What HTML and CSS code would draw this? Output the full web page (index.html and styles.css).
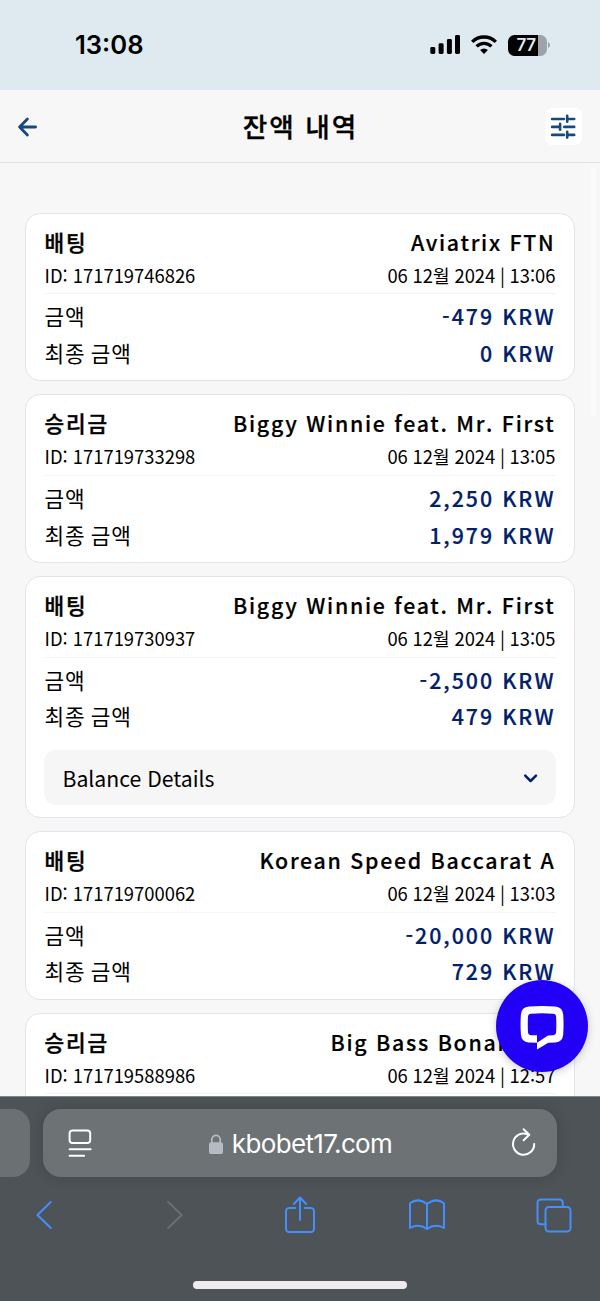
FILE: index.html
```html
<!DOCTYPE html>
<html lang="ko">
<head>
<meta charset="utf-8">
<title>잔액 내역</title>
<link rel="stylesheet" href="styles.css">
</head>
<body>
<div class="phone">
  <div class="status">
    <span class="clock">13:08</span>
    <div class="indicators">
      <svg class="signal" width="31" height="20" viewBox="0 0 31 20"><rect x="0.3" y="12" width="5" height="7" rx="1.4"/><rect x="8.6" y="8.3" width="5" height="10.7" rx="1.4"/><rect x="16.9" y="4" width="5" height="15" rx="1.4"/><rect x="25" y="0" width="5" height="19" rx="1.4"/></svg>
      <svg class="wifi" width="26" height="20" viewBox="0 0 26 20" fill="none" stroke="#000" stroke-width="3.3"><path d="M1.2 6.9a16.6 16.6 0 0 1 23.6 0"/><path d="M5.6 11.4a10.4 10.4 0 0 1 14.8 0"/><path d="M13 18.9l-3.9-3.8a5.5 5.5 0 0 1 7.8 0z" fill="#000" stroke="none"/></svg>
      <div class="battery"><span class="battery-level">77</span></div>
      <svg class="battery-tip" width="2" height="6" viewBox="0 0 2 6"><path d="M0 0a3.2 3.2 0 0 1 0 6z" fill="#9da4a9"/></svg>
    </div>
  </div>
  <header class="topbar">
    <svg class="back" width="20" height="20" viewBox="0 0 20 20" fill="none" stroke="#174a7c" stroke-width="2.8" stroke-linecap="round" stroke-linejoin="round"><path d="M17.6 10H1.6M9.4 2L1.6 10l7.8 8"/></svg>
    <h1 class="heading">잔액 내역</h1>
    <button class="filter" aria-label="필터"><svg width="26" height="26" viewBox="0 0 26 26" fill="none" stroke="#174a7c" stroke-width="2.6" stroke-linecap="round"><path d="M2.1 5h11.8M17.6 5h6.6M17.2 1.9v5.8M2.1 12.9h7.7M10.1 9.9v5.8M14.3 12.9h9.9M2.1 20.9h11.8M17.6 20.9h6.6M17.2 17.8v5.8"/></svg></button>
  </header>
  <main class="feed">
    <div class="thumb"></div>
    <article class="card">
      <div class="row title"><b>배팅</b><b>Aviatrix FTN</b></div>
      <div class="row meta"><span>ID: 171719746826</span><span>06 12월 2024 | 13:06</span></div>
      <div class="row sum"><span>금액</span><b>-479 KRW</b></div>
      <div class="row sum"><span>최종 금액</span><b>0 KRW</b></div>
    </article>
    <article class="card">
      <div class="row title"><b>승리금</b><b>Biggy Winnie feat. Mr. First</b></div>
      <div class="row meta"><span>ID: 171719733298</span><span>06 12월 2024 | 13:05</span></div>
      <div class="row sum"><span>금액</span><b>2,250 KRW</b></div>
      <div class="row sum"><span>최종 금액</span><b>1,979 KRW</b></div>
    </article>
    <article class="card">
      <div class="row title"><b>배팅</b><b>Biggy Winnie feat. Mr. First</b></div>
      <div class="row meta"><span>ID: 171719730937</span><span>06 12월 2024 | 13:05</span></div>
      <div class="row sum"><span>금액</span><b>-2,500 KRW</b></div>
      <div class="row sum"><span>최종 금액</span><b>479 KRW</b></div>
      <div class="details"><span>Balance Details</span><svg width="14" height="9" viewBox="0 0 14 9" fill="none" stroke="#03206a" stroke-width="2.5" stroke-linecap="round" stroke-linejoin="round"><path d="M1.2 2.7L6.6 8 12 2.7"/></svg></div>
    </article>
    <article class="card">
      <div class="row title"><b>배팅</b><b>Korean Speed Baccarat A</b></div>
      <div class="row meta"><span>ID: 171719700062</span><span>06 12월 2024 | 13:03</span></div>
      <div class="row sum"><span>금액</span><b>-20,000 KRW</b></div>
      <div class="row sum"><span>최종 금액</span><b>729 KRW</b></div>
    </article>
    <article class="card">
      <div class="row title"><b>승리금</b><b>Big Bass Bonanza™</b></div>
      <div class="row meta"><span>ID: 171719588986</span><span>06 12월 2024 | 12:57</span></div>
      <div class="row sum"></div>
    </article>
    <button class="chat" aria-label="Chat"><svg width="44" height="46" viewBox="0 0 44 46"><path fill="#fff" fill-rule="evenodd" d="M9 2.5Q22 1.5 35 2.5Q42.600 3 43.200 10.500Q43.900 20 43.200 30.500Q42.600 38 35.500 38.500L28.300 38.800 17 45.500V38.700L8.500 38.500Q1.500 38 .9 30.500Q.2 20 .9 10.500Q1.500 3 9 2.500ZM11 9.700Q8.200 9.900 8 12.500Q7.500 20 8 28.300Q8.200 31 11 31.200H17V38.800L28 31.500 33 31.200Q35.900 31 36.100 28.300Q36.600 20 36.100 12.500Q35.900 9.900 33 9.700Q22 8.900 11 9.700Z"/></svg></button>
  </main>
  <footer class="browser">
    <div class="tabs">
      <div class="tab-prev"></div>
      <div class="address">
        <svg class="reader" width="24" height="28" viewBox="0 0 24 28" fill="none" stroke="#fff" stroke-width="2" stroke-linecap="round"><rect x="1.600" y="1.500" width="20.600" height="12.500" rx="3"/><path d="M1.600 20.300h21M1.600 26.700h14.500"/></svg>
        <div class="site"><svg width="14" height="20" viewBox="0 0 14 20"><rect y="8.300" width="14" height="11.700" rx="2" fill="#b8bac1"/><path d="M2.800 9V5.500a4.200 4.200 0 0 1 8.400 0V9" fill="none" stroke="#b8bac1" stroke-width="1.700"/></svg><span>kbobet17.com</span></div>
        <svg class="reload" width="24" height="28" viewBox="0 0 24 28" fill="none" stroke="#fff" stroke-width="2" stroke-linecap="round" stroke-linejoin="round"><path d="M16.500 5.300A10.600 10.600 0 1 0 23.200 15M12.600.2l5.700 5.500-5.700 5.500"/></svg>
      </div>
    </div>
    <nav class="tools">
      <svg width="16" height="28" viewBox="0 0 16 28" class="nav-back"><path d="M14.800 1L1.400 14l13.400 13"/></svg>
      <svg width="16" height="28" viewBox="0 0 16 28" class="nav-forward"><path d="M1.200 1l13.400 13L1.200 27"/></svg>
      <svg width="30" height="38" viewBox="0 0 30 38" class="share"><path d="M10.300 12H4.500Q1 12 1 15.500v17Q1 36 4.500 36h21q3.500 0 3.500-3.500v-17Q29 12 25.500 12h-5.800M15 24V2M8.800 8L15 1.500 21.200 8"/></svg>
      <svg width="38" height="32" viewBox="0 0 38 32" class="book"><path d="M19 5Q10-1.800 2 4.200V29q9-5 17 1 8-6 17-1V4.200Q28-1.800 19 5zV30"/></svg>
      <svg width="36" height="35" viewBox="0 0 36 35" class="pages"><rect x="9.500" y="9" width="25" height="24.500" rx="3.500"/><path d="M9.500 26.300H5q-3.500 0-3.500-3.500V5Q1.500 1.500 5 1.500h18.300q3.500 0 3.500 3.500v4"/></svg>
    </nav>
    <div class="home"></div>
  </footer>
</div>
</body>
</html>
```
FILE: styles.css
```css
* { box-sizing: border-box; }
body { margin: 0; background: #f7f7f7; color: #000; font-family: "Noto Sans CJK KR", "Noto Sans", sans-serif; }
svg { display: block; flex: none; overflow: visible; }
button { border: 0; padding: 0; }
.phone { width: 600px; height: 1301px; display: flex; flex-direction: column; overflow: hidden; }

.status { flex: none; height: 90px; background: #dfe9f0; display: flex; justify-content: space-between; align-items: center; padding: 0 50px 0 75px; font-family: Inter, sans-serif; }
.clock { font-size: 25.6px; font-weight: 600; letter-spacing: 0; line-height: 30px; }
.indicators { display: flex; align-items: center; }
.wifi { margin: 0 11px 0 10px; }
.battery { width: 39px; height: 21px; border-radius: 6.5px; overflow: hidden; background: linear-gradient(90deg, #000 30px, #9da4a9 30px); color: #dfe9f0; font-size: 17px; font-weight: 600; line-height: 21px; padding-left: 8.5px; }
.battery-level { letter-spacing: -0.3px; }
.battery-tip { margin-left: 1px; }

.topbar { flex: none; height: 73px; border-bottom: 1px solid #dbe2e9; display: flex; justify-content: space-between; align-items: center; padding: 1px 18px 0; }
.back { margin-right: 17px; }
.heading { margin: -2px 0 0 1px; font-size: 26.67px; font-weight: 500; letter-spacing: 2px; line-height: 40px; -webkit-text-stroke: 0.3px; }
.filter { width: 37px; height: 37px; border-radius: 7px; background: #fff; display: grid; place-items: center; padding-right: 1px; }

.feed { flex: none; height: 933px; position: relative; overflow: hidden; padding: 49.7px 25px 0; display: flex; flex-direction: column; gap: 13.3px; }
.thumb { position: absolute; left: 591px; top: 4px; width: 5px; height: 250px; border-radius: 3px; background: #fbfbfb; }
.card { flex: none; border: 1px solid #e1e4ea; border-radius: 15px; background: #fff; padding: 12px 18.5px 9px; }
.row { display: flex; justify-content: space-between; white-space: nowrap; }
.title { height: 32px; line-height: 32px; font-size: 21.33px; letter-spacing: 1.72px; }
.title b, .sum b { font-weight: 500; -webkit-text-stroke: 0.2px; }
.title b:first-child { letter-spacing: 1.9px; -webkit-text-stroke: 0.4px; }
.meta { height: 36.5px; line-height: 34.8px; font-size: 18.4px; border-bottom: 1px solid #f4f4f5; margin-bottom: 4.2px; }
.meta span:last-child { word-spacing: -0.5px; }
.sum { height: 36.4px; line-height: 36.4px; font-size: 21.33px; letter-spacing: 1px; }
.sum span { word-spacing: -2px; }
.sum b { color: #03206a; letter-spacing: 2px; }
.details { height: 54.7px; margin: 15.5px 0 3px -1px; border-radius: 12px; background: #f6f6f6; display: flex; align-items: center; justify-content: space-between; padding: 0 18px 0 19px; font-size: 21.2px; }
.chat { position: absolute; left: 496px; top: 817px; width: 92px; height: 92px; border-radius: 50%; background: #2200f5; display: grid; place-items: center; padding-top: 1px; box-shadow: 0 2px 8px #0003; }

.browser { flex: 1; background: #4d5356; border-top: 1px solid #83878a; display: flex; flex-direction: column; }
.tabs { display: flex; gap: 13px; padding-top: 12px; }
.tab-prev { width: 30px; height: 68px; border-radius: 0 17px 17px 0; background: #6b7072; }
.address { width: 514px; height: 68px; border-radius: 18px; background: #6d7274; display: flex; align-items: center; justify-content: space-between; padding: 0 22px 0 25px; box-shadow: 0 0 16px #0002; }
.site { display: flex; align-items: center; gap: 9px; padding-top: 1px; margin-right: 2px; color: #fff; font: 26px/36px Inter, sans-serif; letter-spacing: -0.65px; }
.tools { display: flex; align-items: center; height: 38px; margin-top: 19px; padding-left: 36px; fill: none; stroke: #438ffc; stroke-width: 2; stroke-linecap: round; stroke-linejoin: round; }
.nav-forward { stroke: #6b6f73; margin-left: 115px; }
.share { margin-left: 102px; }
.book { margin-left: 93px; }
.pages { margin-left: 90px; }
.home { width: 214px; height: 8px; border-radius: 4px; background: #eeecec; margin: 47px auto 0; }
```
